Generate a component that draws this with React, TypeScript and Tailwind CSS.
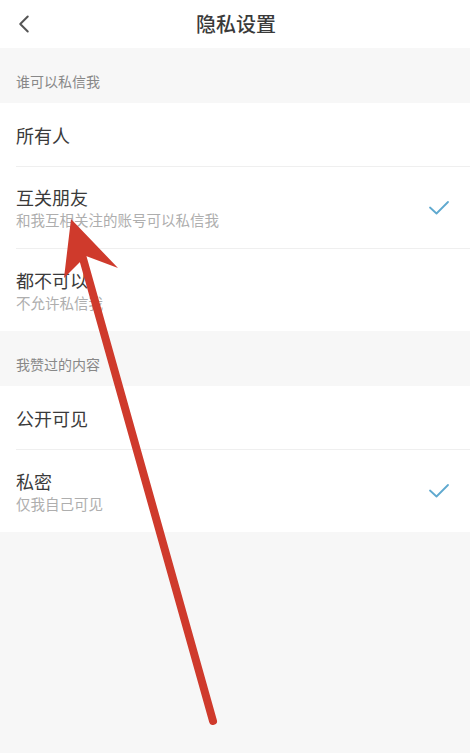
import { ChevronLeft } from "lucide-react";

type Option = { title: string; desc?: string; checked?: boolean };

const sections: { label: string; options: Option[] }[] = [
  {
    label: "谁可以私信我",
    options: [
      { title: "所有人" },
      { title: "互关朋友", desc: "和我互相关注的账号可以私信我", checked: true },
      { title: "都不可以", desc: "不允许私信我" },
    ],
  },
  {
    label: "我赞过的内容",
    options: [
      { title: "公开可见" },
      { title: "私密", desc: "仅我自己可见", checked: true },
    ],
  },
];

function Check() {
  return (
    <svg width="22" height="16" viewBox="0 0 22 16" fill="none">
      <path d="M2 7.5 L8.5 13.5 L20 2" stroke="#5fa9cf" strokeWidth="1.8" strokeLinecap="round" strokeLinejoin="round" />
    </svg>
  );
}

function Row({ opt, last }: { opt: Option; last: boolean }) {
  return (
    <div className="pl-4 bg-white">
      <div
        className={`flex items-center justify-between pr-5 ${opt.desc ? "h-[82px]" : "h-[64px]"} ${
          last ? "" : "border-b border-[#efefef]"
        }`}
      >
        <div className="flex flex-col">
          <span className="text-[18px] leading-[24px] text-[#3a3a3a]">{opt.title}</span>
          {opt.desc && <span className="text-[14.5px] leading-[20px] text-[#aeaeae] mt-[1px]">{opt.desc}</span>}
        </div>
        {opt.checked && <Check />}
      </div>
    </div>
  );
}

export default function App() {
  return (
    <div
      className="relative w-[470px] h-[753px] bg-[#f7f7f7] overflow-hidden"
      style={{ fontFamily: '"Noto Sans CJK SC", "Noto Sans", sans-serif' }}
    >
      {/* Header */}
      <div className="h-[48px] bg-white flex items-center relative">
        <ChevronLeft className="absolute left-[9px] w-[30px] h-[30px] text-[#555]" strokeWidth={1.6} />
        <div className="flex-1 text-center text-[20px] font-medium text-[#3a3a3a] pl-[2px]">隐私设置</div>
      </div>

      {sections.map((s) => (
        <div key={s.label}>
          <div className="h-[55px] flex items-end pb-[11px] pl-4 text-[14px] text-[#888]">{s.label}</div>
          {s.options.map((o, i) => (
            <Row key={o.title} opt={o} last={i === s.options.length - 1} />
          ))}
        </div>
      ))}

      {/* red annotation arrow */}
      <svg className="absolute inset-0 pointer-events-none" width="470" height="753" viewBox="0 0 470 753">
        <line x1="213" y1="721" x2="82" y2="255" stroke="#cf3a2c" strokeWidth="8" strokeLinecap="round" />
        <polygon points="71,219 118,268 86,256 64,278" fill="#cf3a2c" />
      </svg>
    </div>
  );
}
